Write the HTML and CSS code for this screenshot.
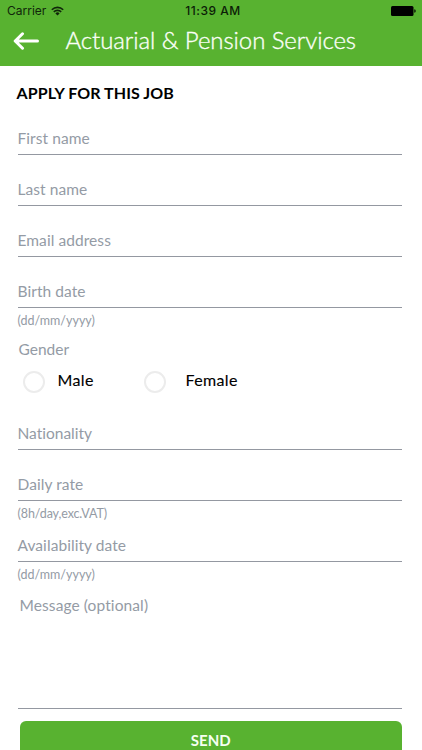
FILE: index.html
```html
<!DOCTYPE html>
<html lang="en">
<head>
<meta charset="utf-8">
<meta name="viewport" content="width=device-width, initial-scale=1">
<title>Apply for this job</title>
<link rel="stylesheet" href="styles.css">
</head>
<body>
<header class="header">
  <div class="status">
    <div class="carrier"><span>Carrier</span>
      <svg class="wifi" width="13" height="10" viewBox="0 0 13 10" fill="none" stroke="#10260a" stroke-width="1.6"><path d="M.8 3.7a8.1 8.1 0 0 1 11.4 0M2.8 5.9a5.2 5.2 0 0 1 7.4 0"/><path d="M4.4 7.4a3 3 0 0 1 4.2 0L6.5 9.5z" fill="#10260a" stroke="none"/></svg>
    </div>
    <span class="time">11:39 AM</span>
    <svg class="battery" width="25" height="10" viewBox="0 0 25 10"><rect width="22.5" height="10" rx="1.5"/><path d="M23.3 3.2q1.4.3 1.4 1.8t-1.4 1.8z"/></svg>
  </div>
  <div class="titlebar">
    <svg class="back" width="26" height="18" viewBox="0 0 26 18" fill="none" stroke="#fff" stroke-width="3" stroke-linecap="round" stroke-linejoin="round"><path d="M24.5 9H2.2M9.5 1.8 2.2 9l7.3 7.2"/></svg>
    <h1 class="title">Actuarial &amp; Pension Services</h1>
  </div>
</header>
<main class="form">
  <h2 class="heading">APPLY FOR THIS JOB</h2>
  <div class="field">First name</div>
  <div class="field">Last name</div>
  <div class="field">Email address</div>
  <div class="field">Birth date</div>
  <div class="hint">(dd/mm/yyyy)</div>
  <div class="gender">Gender</div>
  <div class="radios">
    <div class="option male"><span class="radio"></span><span>Male</span></div>
    <div class="option female"><span class="radio"></span><span>Female</span></div>
  </div>
  <div class="field nationality">Nationality</div>
  <div class="field">Daily rate</div>
  <div class="hint vat">(8h/day,exc.VAT)</div>
  <div class="field short">Availability date</div>
  <div class="hint">(dd/mm/yyyy)</div>
  <div class="message">Message (optional)</div>
  <div class="send">SEND</div>
</main>
</body>
</html>
```
FILE: styles.css
```css
* { box-sizing: border-box; }
body {
  margin: 0;
  height: 750px;
  overflow: hidden;
  background: #fff;
  color: #000;
  font-family: Lato, "Open Sans", sans-serif;
  font-variant-ligatures: none;
}
.header { height: 66px; background: #58b230; }
.status {
  height: 22px;
  padding: 0 6px 0 7px;
  display: grid;
  grid-template-columns: 1fr auto 1fr;
  align-items: center;
  color: #10260a;
  font: 12px/22px Inter, sans-serif;
}
.carrier { display: flex; align-items: center; gap: 5px; }
.time { font-weight: 500; color: #0c1d07; letter-spacing: .5px; margin-left: 3px; }
.battery { justify-self: end; fill: #000; }
.titlebar { height: 44px; display: flex; align-items: center; padding: 0 0 7px 13px; }
.back { margin-top: 1px; }
.title { margin: -2px 0 0 26.5px; font-size: 24px; line-height: 30px; font-weight: 300; letter-spacing: -.08px; -webkit-text-stroke: .35px #fbfff8; color: #fbfff8; white-space: nowrap; }
.form { padding: 0 20px 0 17.5px; }
.heading { margin: 0 0 0 -1px; padding-top: 17px; height: 38px; font-size: 16px; line-height: 20px; font-weight: 700; letter-spacing: .07px; white-space: nowrap; }
.field {
  height: 51px;
  padding-top: 24px;
  border-bottom: 1px solid #9498a1;
  font-size: 15.5px;
  line-height: 20px;
  letter-spacing: .07px;
  color: #949ba5;
}
.hint { height: 25px; padding-top: 5px; font-size: 12.5px; line-height: 16px; color: #949ba5; }
.hint.vat { letter-spacing: -.1px; }
.gender { height: 33px; padding: 6px 0 0 1px; font-size: 15.5px; line-height: 20px; color: #949ba5; }
.radios { height: 33px; display: flex; padding-left: 5px; }
.option { display: flex; align-items: flex-start; font-size: 16px; line-height: 20px; font-weight: 400; letter-spacing: .35px; -webkit-text-stroke: .12px #000; }
.option.male { width: 121px; gap: 13px; }
.option.female { gap: 20px; }
.radio { width: 22px; height: 22px; margin-top: 5px; border: 2px solid #ececec; border-radius: 50%; }
.option span + span { padding-top: 4px; }
.nationality { letter-spacing: 0; }
.field.short { height: 36px; padding-top: 9px; }
.message { height: 122px; padding: 8px 0 0 2px; border-bottom: 1px solid #9498a1; font-size: 15.5px; line-height: 20px; letter-spacing: .1px; color: #949ba5; }
.send {
  height: 44px;
  margin: 12px 0 0 2px;
  padding-top: 9px;
  border-radius: 6px;
  background: #58b230;
  color: #f5fff0;
  text-align: center;
  font-size: 15px;
  line-height: 20px;
  font-weight: 700;
}
```
